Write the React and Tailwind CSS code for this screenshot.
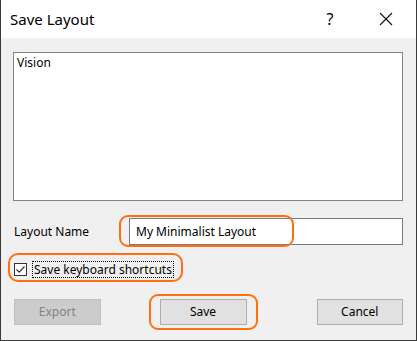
export default function App() {
  const font = { fontFamily: '"Noto Sans", "Open Sans", sans-serif' };
  return (
    <div className="w-[417px] h-[341px] flex flex-col border-x border-b border-[#3a3a3a] bg-[#f0f0f0] text-black overflow-hidden" style={font}>
      <div className="h-[38px] bg-white flex items-center pl-[9px] shrink-0">
        <span className="text-[15px] text-black flex-1 leading-none">Save Layout</span>
        <span className="text-[16px] w-[20px] mr-[39px] text-center leading-none">?</span>
        <svg width="14" height="14" viewBox="0 0 14 14" className="mr-[23px]">
          <path d="M1 1 L13 13 M13 1 L1 13" stroke="#111" strokeWidth="1.1" fill="none" />
        </svg>
      </div>
      <div className="flex-1 flex flex-col pl-[12px] pr-[13px] pt-[14px]">
        <div className="h-[149px] bg-white border border-[#828282] px-[3px] pt-[2px]">
          <div className="text-[12px] leading-[16px]">Vision</div>
        </div>
        <div className="flex items-center mt-[17px] h-[27px]">
          <span className="text-[12px] w-[116px] pl-px">Layout Name</span>
          <div className="relative flex-1 h-[27px]">
            <div className="h-full bg-white border border-[#7a7a7a] flex items-center pl-[6px] text-[12px]">My Minimalist Layout</div>
            <div className="absolute left-[-10px] top-[-3px] w-[175px] h-[32px] rounded-[9px] border-2 border-[#ff6f0f]"></div>
          </div>
        </div>
        <div className="relative flex items-center mt-[18px] h-[13px]">
          <div className="w-[13px] h-[13px] ml-[1px] border border-[#333] bg-white flex items-center justify-center">
            <svg width="11" height="11" viewBox="0 0 11 11">
              <path d="M1.5 5.5 L4.2 8.2 L9.5 2.5" stroke="#333" strokeWidth="1.2" fill="none" />
            </svg>
          </div>
          <span className="ml-[5px] text-[12px] leading-[15px] px-px border border-dotted border-black">Save keyboard shortcuts</span>
          <div className="absolute left-[-5px] top-[-10px] w-[175px] h-[29px] rounded-[10px] border-2 border-[#ff6f0f]"></div>
        </div>
        <div className="flex items-center mt-[23px] pl-[1px]">
          <div className="w-[87px] h-[26px] bg-[#cccccc] border border-[#bfbfbf] flex items-center justify-center text-[12px] text-[#838383]">Export</div>
          <div className="relative ml-[59px]">
            <div className="w-[87px] h-[26px] bg-[#e1e1e1] border border-[#adadad] flex items-center justify-center text-[12px]">Save</div>
            <div className="absolute left-[-11px] top-[-5px] w-[109px] h-[36px] rounded-[9px] border-2 border-[#ff6f0f]"></div>
          </div>
          <div className="w-[87px] h-[26px] ml-[70px] bg-[#e1e1e1] border border-[#adadad] flex items-center justify-center text-[12px]">Cancel</div>
        </div>
      </div>
    </div>
  );
}
